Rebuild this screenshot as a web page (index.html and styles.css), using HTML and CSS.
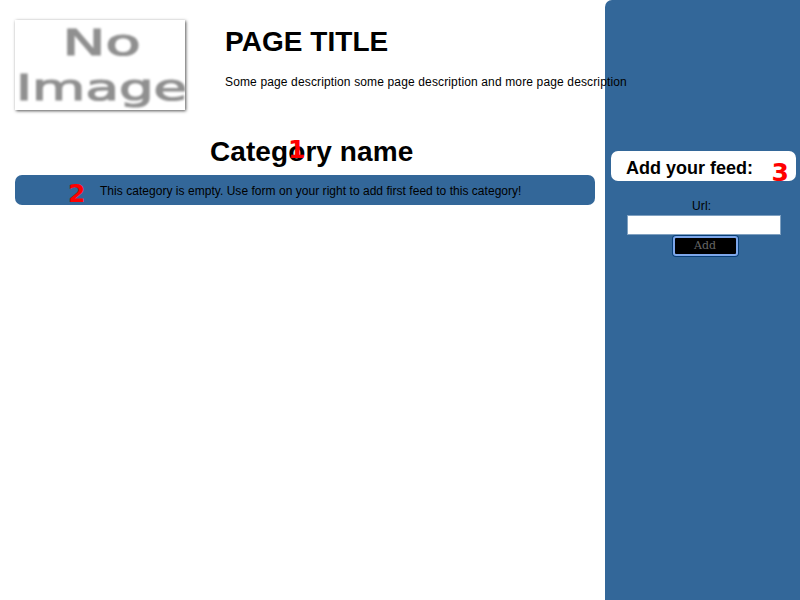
FILE: index.html
```
<!DOCTYPE html>
<html lang="en">
<head>
<meta charset="utf-8">
<title>Page title</title>
<link rel="stylesheet" href="styles.css">
</head>
<body>
<div class="page">
  <main class="main">
    <header class="header">
      <svg class="logo" viewBox="0 0 170 90" role="img" aria-label="No Image">
        <g class="logo-text">
          <text x="0" y="0" transform="translate(47.5 35) scale(1.37 1)" textLength="57" lengthAdjust="spacingAndGlyphs">No</text>
          <text x="0" y="0" transform="translate(1 80) scale(1.37 1)" textLength="125" lengthAdjust="spacingAndGlyphs">Image</text>
        </g>
      </svg>
      <div class="intro">
        <h1 class="title">PAGE TITLE</h1>
        <p class="description">Some page description some page description and more page description</p>
      </div>
    </header>
    <h2 class="category">Category name<span class="marker marker-one">1</span></h2>
    <div class="notice">This category is empty. Use form on your right to add first feed to this category!<span class="marker marker-two">2</span></div>
  </main>
  <aside class="sidebar">
    <h3 class="feed-heading">Add your feed:<span class="marker marker-three">3</span></h3>
    <form class="feed-form">
      <label class="label" for="url">Url:</label>
      <input class="url" id="url" type="text">
      <button class="add" type="button">Add</button>
    </form>
  </aside>
</div>
</body>
</html>
```
FILE: styles.css
```
* { box-sizing: border-box; }
body {
  margin: 0;
  background: #fff;
  color: #000;
  font: 12px/14px "Liberation Sans", Arial, sans-serif;
}
.page { display: flex; height: 600px; overflow: hidden; }
.main { position: relative; z-index: 1; width: 605px; padding: 20px 10px 0 15px; }
.header { display: flex; height: 90px; }
.logo {
  flex: none;
  width: 170px;
  height: 90px;
  background: #fff;
  box-shadow: 1px 1px 3px #555;
}
.logo-text {
  font: 36px "DejaVu Sans", sans-serif;
  fill: #909090;
  stroke: #909090;
  stroke-width: 1.2;
  filter: blur(.8px);
}
.intro { margin-left: 40px; white-space: nowrap; }
.title { margin: 6px 0 0; font-size: 28px; line-height: 32px; letter-spacing: .05px; }
.description { margin: 17px 0 0; letter-spacing: .14px; }
.category {
  position: relative;
  width: 206px;
  margin: 26px 0 0 195px;
  font-size: 28px;
  line-height: 32px;
  letter-spacing: .08px;
  white-space: nowrap;
}
.notice {
  position: relative;
  height: 30px;
  margin-top: 7px;
  padding-left: 85px;
  border-radius: 7px;
  background: #336799;
  line-height: 32px;
  letter-spacing: .035px;
}
.marker {
  position: absolute;
  color: #f00;
  font: bold 25px/30px "DejaVu Sans", sans-serif;
  letter-spacing: 0;
}
.marker-one { left: 78px; top: -1px; }
.marker-two { left: 53px; top: 4px; }
.marker-three { left: 160.5px; top: 7px; }
.sidebar {
  width: 195px;
  padding: 151px 4px 0 6px;
  border-top-left-radius: 7px;
  background: #336799;
}
.feed-heading {
  position: relative;
  height: 30px;
  margin: 0;
  padding-left: 15px;
  border-radius: 7px;
  background: #fff;
  font-size: 18px;
  line-height: 34px;
}
.feed-form { display: flex; flex-direction: column; padding: 18px 15px 0 16px; }
.label { margin-left: 65px; letter-spacing: .14px; }
.url {
  width: 154px;
  height: 20px;
  margin-top: 2px;
  padding: 1px 3px;
  border: 1px solid #7fa0c0;
  background: #fff;
}
.add {
  width: 65px;
  height: 20px;
  margin: 1px 0 0 46px;
  padding: 0 1px 0 0;
  border: 2px solid #7da7eb;
  box-shadow: 0 0 0 1px #083e75;
  border-radius: 3px;
  background: #000;
  color: #666;
  font: 11px/16px "DejaVu Serif", serif;
}
```
